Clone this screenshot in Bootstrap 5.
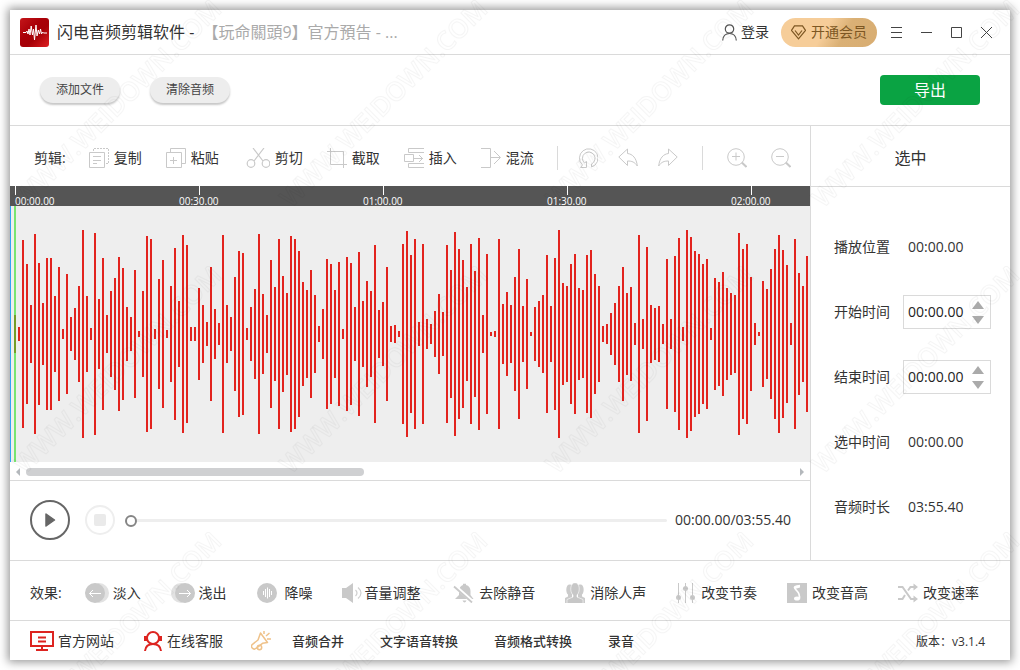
<!DOCTYPE html>
<html lang="zh-CN">
<head>
<meta charset="utf-8">
<meta name="viewport" content="width=device-width, initial-scale=1">
<title>闪电音频剪辑软件</title>
<link href="https://cdn.jsdelivr.net/npm/bootstrap@5.3.0/dist/css/bootstrap.min.css" rel="stylesheet">
<style>
  :root { --rule: #dadada; --ink: #333; --icon: #c9c9c9; --brand: #dd2420; }
  body { font: 14px/20px "Open Sans", "Noto Sans CJK SC", sans-serif; color: var(--ink); background: #fff; }
  svg { flex: none; display: block; }
  button, a { color: inherit; }
  .shell { padding: 10px; position: relative; }
  .app-window { background: #fff; box-shadow: 0 0 9px 2px rgba(0,0,0,.42); }
  .rule-b { border-bottom: 1px solid var(--rule); }
  .bare { border: 0; background: none; padding: 0; text-decoration: none; display: flex; align-items: center; white-space: nowrap; }
  .line-icon { fill: none; stroke: var(--icon); }
  .titlebar { height: 45px; padding: 0 18px 0 10px; }
  .app-title { font-size: 16px; line-height: 24px; font-weight: 400; }
  .app-title span { color: #aaa; margin-left: 4px; }
  .vip { width: 96px; height: 29px; margin: 0 14px 0 12px; border-radius: 15px; background: linear-gradient(120deg, #f6cd99 45%, #dab075 65%, #d8ad72); color: #7d5723; justify-content: center; gap: 5px; }
  .win-ctl { gap: 19px; }
  .filebar { height: 71px; padding: 0 30px; gap: 30px; }
  .pill { width: 80px; height: 26px; padding: 0; border: 0; border-radius: 13px; background: #ededed; color: #444; font-size: 12px; line-height: 26px; box-shadow: 0 2px 2px rgba(0,0,0,.22); }
  .export { width: 100px; height: 30px; padding: 0; border: 0; border-radius: 4px; background: #0aa343; font-size: 16px; line-height: 30px; }
  .editbar { height: 60px; padding: 4px 19px 0 24px; }
  .editbar .tools { gap: 24px; margin-left: 23px; }
  .editbar .bare { gap: 5px; }
  .history { gap: 20px; margin: 0 24px 0 20px; }
  .zooms { gap: 24px; }
  .bar-sep { width: 1px; height: 24px; background: var(--rule); }
  .ruler { height: 20px; background: #555; color: #fff; padding-left: 5px; font: 500 10px/12px "Open Sans", sans-serif; }
  .tick { flex: 0 0 184px; position: relative; padding-top: 9px; }
  .tick:last-child { flex: 1 1 0; min-width: 0; }
  .tick::before { content: ""; position: absolute; left: 0; top: 0; width: 1px; height: 9px; background: #fff; }
  .tick span { display: block; width: 40px; white-space: nowrap; }
  .tick + .tick span { margin-left: -20px; }
  .wave { background: #eee; overflow: hidden; flex: 1 0 256px; }
  .scroller { height: 19px; padding: 2px 5px 0; }
  .scroll-track { padding: 0 5px; }
  .scroll-thumb { width: 44%; height: 8px; border-radius: 4px; background: #cfd0d2; }
  .player { height: 79px; padding: 0 19px 1px 20px; }
  .stop { margin: 0 10px 0 15px; }
  .seek { appearance: none; background: none; height: 20px; min-width: 0; margin: 0; }
  .seek::-webkit-slider-runnable-track { height: 3px; border-radius: 2px; background: #eee; }
  .seek::-webkit-slider-thumb { appearance: none; width: 12px; height: 12px; margin-top: -4px; border: 2px solid #858585; border-radius: 50%; background: #fff; }
  .seek::-moz-range-track { height: 3px; background: #eee; }
  .seek::-moz-range-thumb { width: 8px; height: 8px; border: 2px solid #858585; background: #fff; }
  .side { flex: 0 0 200px; border-left: 1px solid var(--rule); }
  .side h2 { height: 61px; margin: 0; padding-top: 6px; font-size: 16px; font-weight: 400; }
  .facts { padding: 43px 19px 35px 23px; gap: 31px; }
  .fact { height: 34px; gap: 13px; }
  .field { width: 88px; height: 34px; border: 1px solid transparent; padding: 0 4px; display: flex; align-items: center; justify-content: space-between; }
  .field.boxed { border-color: var(--rule); color: #222; }
  .field input { width: 60px; border: 0; padding: 0; background: none; color: inherit; }
  .spin { gap: 7px; padding-right: 2px; }
  .effects { height: 60px; padding: 5px 31px 0 20px; }
  .effects .list { margin-left: 23px; }
  .footer { height: 39px; padding: 0 25px 0 20px; }
  .footer .links { gap: 36px; margin-left: 21px; font-size: 13px; font-weight: 500; }
  .version { font-size: 12px; padding-top: 3px; }
  .watermark { position: absolute; inset: 0; width: 100%; height: 100%; pointer-events: none; z-index: 5; }
  .watermark text { font: 600 26px "Open Sans", sans-serif; fill: none; stroke: #000; stroke-opacity: .04; }
</style>
</head>
<body>
<div class="shell min-vh-100 d-flex flex-column">
<div class="app-window flex-grow-1 d-flex flex-column">

  <header class="titlebar rule-b d-flex align-items-center">
    <svg width="29" height="29" viewBox="0 0 29 29">
      <defs><linearGradient id="lg" x1="0" y1="0" x2="1" y2="1"><stop offset="0" stop-color="#c4161a"/><stop offset=".4" stop-color="#a90008"/><stop offset=".6" stop-color="#a50006"/><stop offset="1" stop-color="#de1f22"/></linearGradient></defs>
      <rect width="29" height="29" rx="3" fill="url(#lg)"/>
      <path d="M3 14.500h3l1-1.500 1 3 1-5 1 6 1.200-9 1.300 9 1-6 1 11 1.500-15 1 11 1.300-6 1.200 4 1-5 1 5 1-2 1 1h3.500" fill="none" stroke="#fff"/>
    </svg>
    <h1 class="app-title m-0 ms-2 text-truncate">闪电音频剪辑软件 - <span>【玩命關頭9】官方預告 - ...</span></h1>
    <div class="ms-auto d-flex align-items-center">
      <button type="button" class="bare gap-1">
        <svg width="15" height="17" viewBox="0 0 15 17" fill="none" stroke="#555" stroke-width="1.2"><circle cx="7.500" cy="5" r="4.200"/><path d="M.7 16.500C1 12 3.500 9.500 7.500 9.500s6.500 2.500 6.800 7"/></svg>登录
      </button>
      <button type="button" class="bare vip">
        <svg width="15" height="15" viewBox="0 0 15 15" fill="none" stroke="#7d5723" stroke-width="1.200"><path d="M3.500.8h8l3 4.500-7 8.500-7-8.500zM4 5.500l3.500 4.500L11 5.500"/></svg>开通会员
      </button>
      <div class="win-ctl d-flex">
        <button type="button" class="bare" aria-label="菜单"><svg width="11" height="11" viewBox="0 0 11 11" stroke="#444"><path d="M0 .5h11M0 5.500h11M0 10.500h11"/></svg></button>
        <button type="button" class="bare" aria-label="最小化"><svg width="11" height="11" viewBox="0 0 11 11" stroke="#444"><path d="M0 5.500h11"/></svg></button>
        <button type="button" class="bare" aria-label="最大化"><svg width="11" height="11" viewBox="0 0 11 11" fill="none" stroke="#444"><path d="M.5.5h10v10H.5z"/></svg></button>
        <button type="button" class="bare" aria-label="关闭"><svg width="11" height="11" viewBox="0 0 11 11" stroke="#444"><path d="M0 0l11 11M11 0L0 11"/></svg></button>
      </div>
    </div>
  </header>

  <div class="filebar rule-b d-flex align-items-center">
    <button type="button" class="btn pill">添加文件</button>
    <button type="button" class="btn pill">清除音频</button>
    <button type="button" class="btn btn-success export ms-auto">导出</button>
  </div>

  <main class="d-flex flex-grow-1 rule-b">
    <section class="d-flex flex-column flex-grow-1 overflow-hidden">
      <div class="editbar d-flex align-items-center">
        <span>剪辑:</span>
        <div class="tools d-flex align-items-center">
          <button type="button" class="bare"><svg class="line-icon" width="20" height="20" viewBox="0 0 20 20"><path d="M.5 4.500h15v15H.5zM4 8.500h8M4 12.500h8M4 15.500h4"/><path stroke-dasharray="2 1" d="M4.500 3V.5h15v15H16"/></svg>复制</button>
          <button type="button" class="bare"><svg class="line-icon" width="20" height="20" viewBox="0 0 20 20"><path d="M.5 4.500h15v15H.5zM4.500 4V.5h15v15H16M4 12.500h7M7.500 9v7"/></svg>粘贴</button>
          <button type="button" class="bare"><svg class="line-icon" width="27" height="20" viewBox="0 0 27 20" stroke-width="1.200"><path d="M10 0l10 13M21 0L11 13"/><circle cx="8" cy="15.500" r="3.800"/><circle cx="23" cy="15.500" r="3.800"/></svg>剪切</button>
          <button type="button" class="bare"><svg class="line-icon" width="20" height="20" viewBox="0 0 20 20"><path d="M0 3.500h16.500V20M3.500 0v16.500H20"/></svg>截取</button>
          <button type="button" class="bare"><svg class="line-icon" width="20" height="20" viewBox="0 0 20 20"><path d="M20 .5H4.500v4H20M20 19.500H4.500v-4H20M.5 6.500h9v7h-9zM10 10.500h9M15 7l3.500 3.500L15 14"/></svg>插入</button>
          <button type="button" class="bare"><svg class="line-icon" width="20" height="20" viewBox="0 0 20 20"><path d="M0 .5h9.500v19H0M10 9.500h9M13 3l6.500 6.500L13 16"/></svg>混流</button>
        </div>
        <div class="ms-auto d-flex align-items-center">
          <span class="bar-sep"></span>
          <div class="history d-flex">
            <button type="button" class="bare" aria-label="还原"><svg class="line-icon" width="20" height="20" viewBox="0 0 20 20"><path d="M2.500 19.500h6v-6L6.500 15A6.300 6.300 0 1 1 13.500 16v3A9.300 9.300 0 1 0 4.500 17z"/></svg></button>
            <button type="button" class="bare" aria-label="撤销"><svg class="line-icon" width="20" height="20" viewBox="0 0 20 20"><path d="M.8 9L9.500 1v4.500c5 .5 9 4.500 9.800 12.500-2.500-4-5.500-5-9.800-5v4.500z"/></svg></button>
            <button type="button" class="bare" aria-label="重做"><svg class="line-icon" width="20" height="20" viewBox="0 0 20 20"><path d="M19.200 9L10.500 1v4.500C5.500 6 1.500 10 .7 18c2.500-4 5.500-5 9.800-5v4.500z"/></svg></button>
          </div>
          <span class="bar-sep"></span>
          <div class="zooms d-flex ms-4">
            <button type="button" class="bare" aria-label="放大"><svg class="line-icon" width="20" height="20" viewBox="0 0 20 20"><circle cx="9" cy="9" r="8.300"/><path d="M5 8.500h8M9 4.500v8"/><path stroke-width="2" d="M14.800 14.500l4.700 4.500"/></svg></button>
            <button type="button" class="bare" aria-label="缩小"><svg class="line-icon" width="20" height="20" viewBox="0 0 20 20"><circle cx="9" cy="9" r="8.300"/><path d="M5 8.500h8"/><path stroke-width="2" d="M14.800 14.500l4.700 4.500"/></svg></button>
          </div>
        </div>
      </div>

      <div class="ruler d-flex">
        <div class="tick"><span>00:00.00</span></div>
        <div class="tick"><span>00:30.00</span></div>
        <div class="tick"><span>01:00.00</span></div>
        <div class="tick"><span>01:30.00</span></div>
        <div class="tick"><span>02:00.00</span></div>
      </div>
      <div class="wave d-flex align-items-center">
        <svg width="800" height="256" role="img" aria-label="音频波形">
          <path id="bars" stroke="#e2231e" stroke-width="2" fill="none"/>
          <path d="M.5 0v256" stroke="#2fa4f5"/>
          <path d="M5 0v256" stroke="#39e02c" stroke-opacity=".65" stroke-width="2"/>
        </svg>
      </div>
      <div class="scroller rule-b d-flex align-items-center">
        <svg width="6" height="8" viewBox="0 0 6 8"><path d="M5 0v8L1 4z" fill="#b4b8bc"/></svg>
        <div class="scroll-track flex-grow-1"><div class="scroll-thumb"></div></div>
        <svg width="6" height="8" viewBox="0 0 6 8"><path d="M1 0v8l4-4z" fill="#b4b8bc"/></svg>
      </div>
      <div class="player d-flex align-items-center">
        <button type="button" class="bare" aria-label="播放"><svg width="40" height="40" viewBox="0 0 40 40"><circle cx="20" cy="20" r="19" fill="none" stroke="#666" stroke-width="2"/><path d="M16 14l8.500 6-8.500 6z" fill="#666" stroke="#666" stroke-width="1.500" stroke-linejoin="round"/></svg></button>
        <button type="button" class="bare stop" aria-label="停止"><svg width="30" height="30" viewBox="0 0 30 30"><circle cx="15" cy="15" r="14" fill="none" stroke="#eee" stroke-width="2"/><rect x="9" y="9" width="12" height="12" rx="2" fill="#eaeaea"/></svg></button>
        <input class="seek flex-grow-1" type="range" min="0" max="235" value="0" aria-label="播放进度">
        <span class="ms-2 text-nowrap">00:00.00/03:55.40</span>
      </div>
    </section>

    <aside class="side">
      <h2 class="rule-b d-flex align-items-center justify-content-center">选中</h2>
      <div class="facts d-flex flex-column">
        <div class="fact d-flex align-items-center"><span>播放位置</span><span class="field">00:00.00</span></div>
        <div class="fact d-flex align-items-center"><label for="start">开始时间</label>
          <div class="field boxed"><input id="start" type="text" value="00:00.00">
            <div class="spin d-flex flex-column"><button type="button" class="bare" aria-label="增加开始时间"><svg width="12" height="8" viewBox="0 0 12 8"><path d="M6 0l6 8H0z" fill="#aaa"/></svg></button><button type="button" class="bare" aria-label="减少开始时间"><svg width="12" height="8" viewBox="0 0 12 8"><path d="M6 8l6-8H0z" fill="#aaa"/></svg></button></div></div></div>
        <div class="fact d-flex align-items-center"><label for="end">结束时间</label>
          <div class="field boxed"><input id="end" type="text" value="00:00.00">
            <div class="spin d-flex flex-column"><button type="button" class="bare" aria-label="增加结束时间"><svg width="12" height="8" viewBox="0 0 12 8"><path d="M6 0l6 8H0z" fill="#aaa"/></svg></button><button type="button" class="bare" aria-label="减少结束时间"><svg width="12" height="8" viewBox="0 0 12 8"><path d="M6 8l6-8H0z" fill="#aaa"/></svg></button></div></div></div>
        <div class="fact d-flex align-items-center"><span>选中时间</span><span class="field">00:00.00</span></div>
        <div class="fact d-flex align-items-center"><span>音频时长</span><span class="field">03:55.40</span></div>
      </div>
    </aside>
  </main>

  <div class="effects rule-b d-flex align-items-center">
    <span>效果:</span>
    <div class="list d-flex flex-grow-1 justify-content-between">
      <button type="button" class="bare"><svg width="28" height="20" viewBox="0 0 28 20"><circle cx="14" cy="10" r="10" fill="#e2e2e2"/><circle cx="10" cy="10" r="10" fill="#c9c9c9"/><path d="M16 10.500H4.500M8 7l-3.500 3.500L8 14" fill="none" stroke="#fff"/></svg>淡入</button>
      <button type="button" class="bare"><svg width="28" height="20" viewBox="0 0 28 20"><circle cx="10" cy="10" r="10" fill="#e2e2e2"/><circle cx="14" cy="10" r="10" fill="#c9c9c9"/><path d="M8 10.500h11.500M16 7l3.500 3.500L16 14" fill="none" stroke="#fff"/></svg>浅出</button>
      <button type="button" class="bare"><svg width="28" height="20" viewBox="0 0 28 20"><circle cx="10" cy="10" r="10" fill="#c9c9c9"/><path d="M6.500 8v4M8.500 6v8M10.500 4.500v11M12.500 6v8M14.500 8v4" stroke="#fff"/></svg>降噪</button>
      <button type="button" class="bare"><svg width="22" height="20" viewBox="0 0 22 20"><path d="M0 5h4l7-5v20l-7-5H0z" fill="#c9c9c9"/><path d="M13.500 7q3 3 0 6M16 4.500q6 5.500 0 11" fill="none" stroke="#d0d0d0" stroke-width="1.200"/></svg>音量调整</button>
      <button type="button" class="bare"><svg width="29" height="20" viewBox="0 0 29 20"><path d="M5 16l4-4V8c0-3 2-5.500 4-6V.8h3V2c3 .7 4.500 3 4.500 6v4l3 4zM12.500 17.500h4q-2 4-4 0z" fill="#c9c9c9"/><path d="M5 3l18 16" stroke="#fff" stroke-width="3.500"/><path d="M4 3.500l18 16" stroke="#c9c9c9" stroke-width="1.800"/></svg>去除静音</button>
      <button type="button" class="bare"><svg width="25" height="20" viewBox="0 0 25 20"><path d="M0 20v-5l3-1.500v-2C.5 10 .5 1 5 1.500c4 0 4 8 2 10v3L9 20zM20 20v-5l-3-1.500v-2c2.500-1.500 2.500-10.500-2-10-4 0-4 8-2 10v3L11 20z" fill="#cbcbcb"/><path d="M2 21v-4.500l6-2.500v-2C4.500 9 5 -.3 10-.3S15.500 9 12 12v2l6 2.500V21z" fill="#c7c7c7" stroke="#fff" stroke-width=".6"/></svg>消除人声</button>
      <button type="button" class="bare"><svg width="25" height="20" viewBox="0 0 25 20"><path d="M2.500 0v20M9.500 0v20M16.500 0v20" stroke="#c9c9c9"/><g fill="#c9c9c9"><circle cx="2.500" cy="14.500" r="2.500"/><circle cx="9.500" cy="5.500" r="2.500"/><circle cx="16.500" cy="14.500" r="2.500"/></g></svg>改变节奏</button>
      <button type="button" class="bare"><svg width="25" height="20" viewBox="0 0 25 20"><path d="M0 0h20v20H0z" fill="#c9c9c9"/><path d="M13 2.500c-7 1-6.500 2-3 5.500 2.500 2.500 3 4 2.300 8" fill="none" stroke="#fff" stroke-width="1.700"/><path d="M7.500 3l5.500-1v2.500L8 6z" fill="#fff"/><ellipse cx="10" cy="15.500" rx="3" ry="2" fill="#fff"/></svg>改变音高</button>
      <button type="button" class="bare"><svg width="25" height="20" viewBox="0 0 25 20"><path d="M0 4h4.500l8.500 12h4M0 16h4.500l2.500-4M10 7.500L12.500 4H17" fill="none" stroke="#c9c9c9" stroke-width="2"/><path d="M15.500.5L20 4l-4.500 3.500zM15.500 12.500L20 16l-4.500 3.500z" fill="#c9c9c9"/></svg>改变速率</button>
    </div>
  </div>

  <footer class="footer d-flex align-items-center">
    <a href="#" class="bare gap-1"><svg width="24" height="20" viewBox="0 0 24 20" fill="none" stroke="#dd2420" stroke-width="2"><path d="M1 1h22v14H1zM6 19h12M12 15v4M8 6.500h8M8 10.500h8"/></svg>官方网站</a>
    <a href="#" class="bare ms-4 ps-1 gap-1"><svg width="21" height="20" viewBox="0 0 21 20" fill="none" stroke="#dd2420" stroke-width="2"><circle cx="11" cy="7" r="6"/><path d="M3 20c.5-5 4-7 8-7s7.500 2 8 7"/><path stroke-width="3" d="M3.500 5v5M18.500 5v5"/></svg>在线客服</a>
    <a href="#" class="bare ms-4 ps-1" aria-label="公告"><svg width="20" height="20" viewBox="0 0 20 20" fill="none" stroke="#efc28a" stroke-width="1.500" stroke-linejoin="round"><path d="M9.500 2l7 9.500-5 .8-6.500 5a2.500 2.500 0 0 1-3.500-4L7 9z"/><circle cx="8.500" cy="16.500" r="2.200"/><path d="M13 3V0M15 5l3.500-3M16 8h4"/></svg></a>
    <nav class="links d-flex">
      <a href="#" class="bare">音频合并</a><a href="#" class="bare">文字语音转换</a><a href="#" class="bare">音频格式转换</a><a href="#" class="bare">录音</a>
    </nav>
    <span class="version ms-auto text-nowrap">版本：v3.1.4</span>
  </footer>
</div>

<svg class="watermark" aria-hidden="true">
  <defs><pattern id="wm" x="3" y="0" width="266" height="266" patternUnits="userSpaceOnUse">
    <text transform="translate(22 209) rotate(-45)">WWW.WEIDOWN.COM</text>
  </pattern></defs>
  <rect width="100%" height="100%" fill="url(#wm)"/>
</svg>
</div>

<script src="https://cdn.jsdelivr.net/npm/bootstrap@5.3.0/dist/js/bootstrap.bundle.min.js"></script>
<script>
  // Peak amplitude of each sample group, one bar every 4 px.
  const peaks = [19,7,94,70,29,100,71,31,76,76,38,67,5,60,17,26,48,104,38,6,101,35,76,19,43,56,77,66,27,17,64,3,43,98,95,5,55,74,4,48,86,33,99,89,7,7,46,29,12,67,25,11,99,29,17,57,83,81,6,27,45,100,40,19,74,47,95,58,41,98,95,83,52,44,64,39,8,25,75,70,44,72,5,77,71,27,82,33,53,43,89,24,32,67,8,9,3,90,103,79,95,12,90,15,10,23,40,22,89,64,102,85,74,47,90,63,96,19,80,2,3,95,30,42,29,57,85,28,55,2,27,33,39,79,28,76,104,51,48,70,80,46,44,79,84,60,48,8,10,21,31,48,67,41,47,11,99,15,87,29,26,28,10,75,15,78,96,7,104,97,83,80,70,75,6,56,52,62,46,41,39,101,85,90,57,11,2,53,45,65,85,99,84,69,11,95,61,48,78];
  document.getElementById('bars').setAttribute('d',
    peaks.map((p, i) => `M${5 + i * 4} ${128 - p}v${p * 2}`).join(''));
</script>
</body>
</html>
